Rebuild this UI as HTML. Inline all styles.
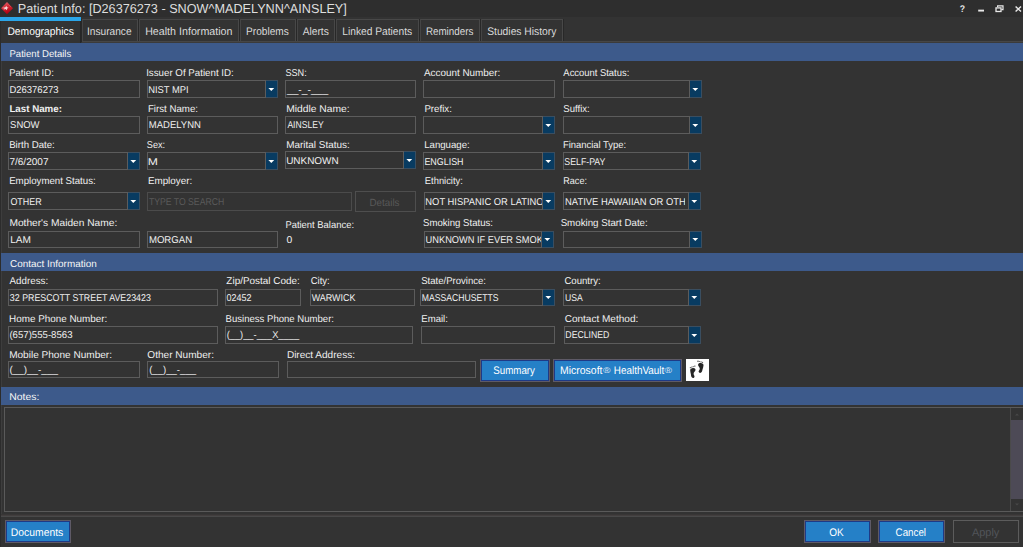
<!DOCTYPE html>
<html lang="en"><head><meta charset="utf-8"><title>Patient Info</title><style>
*{box-sizing:border-box;margin:0;padding:0}
html,body{width:1023px;height:547px;overflow:hidden;background:#333333}
body{position:relative;font-family:"Liberation Sans","DejaVu Sans",sans-serif;font-size:10px;color:#f0f0f0}
.a{position:absolute}
.t{position:absolute;white-space:pre;transform-origin:0 0;display:block;text-rendering:geometricPrecision}
</style></head><body>
<div class="a " style="left:0;top:0;width:1023px;height:17px;background:#2e2e2e"></div>
<svg class="a" style="left:0px;top:1px" width="15" height="15" viewBox="0 0 15 15"><defs><linearGradient id="g" x1="0" y1="0" x2="0.3" y2="1"><stop offset="0" stop-color="#e8707a"/><stop offset="0.45" stop-color="#d22a36"/><stop offset="1" stop-color="#b00010"/></linearGradient></defs><polygon points="7,1.100 13,7.200 7,13.300 1,7.200" fill="url(#g)"/><path d="M1.800 7.100l3.600-.9 .8-1.500 .9 1.600 1.500.5 -1.400.8 -.3 1.700 -1.300-1.200 -2.200.6 1.200-1.300z" fill="#fbe4e6" opacity=".92"/><path d="M8.500 3.500l2.500 2.600" stroke="#e88" stroke-width=".6" opacity=".6"/></svg>
<svg class="a" style="left:955px;top:0" width="68" height="17" viewBox="0 0 68 17"><g fill="none" stroke="#e8e8e8"><path d="M23.2 10.6h5.8" stroke-width="1.9"/><path d="M42.6 7V5.8h5.4v3.8h-1.6" stroke-width="1.2"/><rect x="41" y="7.9" width="5" height="3.6" stroke-width="1.3"/><path d="M60.6 6.4l5.4 5.2M66 6.4l-5.4 5.2" stroke-width="1.4"/></g></svg>
<div class="a " style="left:0;top:17px;width:81px;height:4px;background:#2ba5e8"></div>
<div class="a " style="left:0px;top:21px;width:81px;height:22px;border-left:1px solid #2b2b2b;border-right:1px solid #262626"></div>
<div class="a " style="left:82px;top:19px;width:56px;height:23px;border:1px solid #484848;border-left-color:#454545"></div>
<div class="a " style="left:81px;top:19px;width:1px;height:23px;background:#282828"></div>
<div class="a " style="left:139px;top:19px;width:100px;height:23px;border:1px solid #484848;border-left-color:#454545"></div>
<div class="a " style="left:138px;top:19px;width:1px;height:23px;background:#282828"></div>
<div class="a " style="left:240px;top:19px;width:56px;height:23px;border:1px solid #484848;border-left-color:#454545"></div>
<div class="a " style="left:239px;top:19px;width:1px;height:23px;background:#282828"></div>
<div class="a " style="left:297px;top:19px;width:38px;height:23px;border:1px solid #484848;border-left-color:#454545"></div>
<div class="a " style="left:296px;top:19px;width:1px;height:23px;background:#282828"></div>
<div class="a " style="left:336px;top:19px;width:83px;height:23px;border:1px solid #484848;border-left-color:#454545"></div>
<div class="a " style="left:335px;top:19px;width:1px;height:23px;background:#282828"></div>
<div class="a " style="left:420px;top:19px;width:60px;height:23px;border:1px solid #484848;border-left-color:#454545"></div>
<div class="a " style="left:419px;top:19px;width:1px;height:23px;background:#282828"></div>
<div class="a " style="left:481px;top:19px;width:82px;height:23px;border:1px solid #484848;border-left-color:#454545"></div>
<div class="a " style="left:480px;top:19px;width:1px;height:23px;background:#282828"></div>
<div class="a " style="left:563px;top:19px;width:1px;height:23px;background:#282828"></div>
<div class="a " style="left:82px;top:41px;width:941px;height:1px;background:#464646"></div>
<div class="a " style="left:82px;top:42px;width:941px;height:1px;background:#3b3b3b"></div>
<div class="a " style="left:0;top:21px;width:1px;height:526px;background:#2c2c2c"></div>
<div class="a " style="left:1px;top:43px;width:1px;height:473px;background:#3d3d3d"></div>
<div class="a " style="left:1px;top:43px;width:1022px;height:18px;background:#3d5a8b"></div>
<div class="a " style="left:1px;top:253px;width:1022px;height:18px;background:#3d5a8b"></div>
<div class="a " style="left:1px;top:387px;width:1022px;height:18px;background:#3d5a8b"></div>
<div class="a " style="left:8px;top:80px;width:132px;height:18px;border:1px solid #5c5c5c"></div>
<div class="a " style="left:147px;top:80px;width:131px;height:18px;border:1px solid #5c5c5c"></div>
<div class="a " style="left:265px;top:80px;width:1px;height:18px;background:#5c5c5c"></div>
<div class="a " style="left:266px;top:80px;width:12px;height:18px;background:#083b61;border:1px solid #3a4e60;border-left:0"></div>
<svg class="a" style="left:268px;top:88px" width="7" height="4" viewBox="0 0 7 4"><polygon points="0.4,0 6.2,0 3.3,3.1" fill="#fff"/></svg>
<div class="a " style="left:285px;top:80px;width:131px;height:18px;border:1px solid #5c5c5c"></div>
<div class="a " style="left:423px;top:80px;width:132px;height:18px;border:1px solid #5c5c5c"></div>
<div class="a " style="left:563px;top:80px;width:139px;height:18px;border:1px solid #5c5c5c"></div>
<div class="a " style="left:689px;top:80px;width:1px;height:18px;background:#5c5c5c"></div>
<div class="a " style="left:690px;top:80px;width:12px;height:18px;background:#083b61;border:1px solid #3a4e60;border-left:0"></div>
<svg class="a" style="left:692px;top:88px" width="7" height="4" viewBox="0 0 7 4"><polygon points="0.4,0 6.2,0 3.3,3.1" fill="#fff"/></svg>
<div class="a " style="left:8px;top:116px;width:132px;height:18px;border:1px solid #5c5c5c"></div>
<div class="a " style="left:147px;top:116px;width:131px;height:18px;border:1px solid #5c5c5c"></div>
<div class="a " style="left:285px;top:116px;width:131px;height:18px;border:1px solid #5c5c5c"></div>
<div class="a " style="left:423px;top:116px;width:132px;height:18px;border:1px solid #5c5c5c"></div>
<div class="a " style="left:542px;top:116px;width:1px;height:18px;background:#5c5c5c"></div>
<div class="a " style="left:543px;top:116px;width:12px;height:18px;background:#083b61;border:1px solid #3a4e60;border-left:0"></div>
<svg class="a" style="left:545px;top:124px" width="7" height="4" viewBox="0 0 7 4"><polygon points="0.4,0 6.2,0 3.3,3.1" fill="#fff"/></svg>
<div class="a " style="left:563px;top:116px;width:139px;height:18px;border:1px solid #5c5c5c"></div>
<div class="a " style="left:689px;top:116px;width:1px;height:18px;background:#5c5c5c"></div>
<div class="a " style="left:690px;top:116px;width:12px;height:18px;background:#083b61;border:1px solid #3a4e60;border-left:0"></div>
<svg class="a" style="left:692px;top:124px" width="7" height="4" viewBox="0 0 7 4"><polygon points="0.4,0 6.2,0 3.3,3.1" fill="#fff"/></svg>
<div class="a " style="left:8px;top:152px;width:132px;height:18px;border:1px solid #5c5c5c"></div>
<div class="a " style="left:127px;top:152px;width:1px;height:18px;background:#5c5c5c"></div>
<div class="a " style="left:128px;top:152px;width:12px;height:18px;background:#083b61;border:1px solid #3a4e60;border-left:0"></div>
<svg class="a" style="left:130px;top:160px" width="7" height="4" viewBox="0 0 7 4"><polygon points="0.4,0 6.2,0 3.3,3.1" fill="#fff"/></svg>
<div class="a " style="left:147px;top:152px;width:131px;height:18px;border:1px solid #5c5c5c"></div>
<div class="a " style="left:265px;top:152px;width:1px;height:18px;background:#5c5c5c"></div>
<div class="a " style="left:266px;top:152px;width:12px;height:18px;background:#083b61;border:1px solid #3a4e60;border-left:0"></div>
<svg class="a" style="left:268px;top:160px" width="7" height="4" viewBox="0 0 7 4"><polygon points="0.4,0 6.2,0 3.3,3.1" fill="#fff"/></svg>
<div class="a " style="left:285px;top:151px;width:131px;height:18px;border:1px solid #5c5c5c"></div>
<div class="a " style="left:403px;top:151px;width:1px;height:18px;background:#5c5c5c"></div>
<div class="a " style="left:404px;top:151px;width:12px;height:18px;background:#083b61;border:1px solid #3a4e60;border-left:0"></div>
<svg class="a" style="left:406px;top:159px" width="7" height="4" viewBox="0 0 7 4"><polygon points="0.4,0 6.2,0 3.3,3.1" fill="#fff"/></svg>
<div class="a " style="left:423px;top:152px;width:132px;height:18px;border:1px solid #5c5c5c"></div>
<div class="a " style="left:542px;top:152px;width:1px;height:18px;background:#5c5c5c"></div>
<div class="a " style="left:543px;top:152px;width:12px;height:18px;background:#083b61;border:1px solid #3a4e60;border-left:0"></div>
<svg class="a" style="left:545px;top:160px" width="7" height="4" viewBox="0 0 7 4"><polygon points="0.4,0 6.2,0 3.3,3.1" fill="#fff"/></svg>
<div class="a " style="left:563px;top:152px;width:138px;height:18px;border:1px solid #5c5c5c"></div>
<div class="a " style="left:688px;top:152px;width:1px;height:18px;background:#5c5c5c"></div>
<div class="a " style="left:689px;top:152px;width:12px;height:18px;background:#083b61;border:1px solid #3a4e60;border-left:0"></div>
<svg class="a" style="left:691px;top:160px" width="7" height="4" viewBox="0 0 7 4"><polygon points="0.4,0 6.2,0 3.3,3.1" fill="#fff"/></svg>
<div class="a " style="left:8px;top:192px;width:132px;height:18px;border:1px solid #5c5c5c"></div>
<div class="a " style="left:127px;top:192px;width:1px;height:18px;background:#5c5c5c"></div>
<div class="a " style="left:128px;top:192px;width:12px;height:18px;background:#083b61;border:1px solid #3a4e60;border-left:0"></div>
<svg class="a" style="left:130px;top:200px" width="7" height="4" viewBox="0 0 7 4"><polygon points="0.4,0 6.2,0 3.3,3.1" fill="#fff"/></svg>
<div class="a " style="left:147px;top:192px;width:205px;height:19px;border:1px solid #4b4b4b"></div>
<div class="a " style="left:355px;top:191px;width:61px;height:21px;border:1px solid #4e4e4e"></div>
<div class="a " style="left:424px;top:192px;width:131px;height:18px;border:1px solid #5c5c5c"></div>
<div class="a " style="left:542px;top:192px;width:1px;height:18px;background:#5c5c5c"></div>
<div class="a " style="left:543px;top:192px;width:12px;height:18px;background:#083b61;border:1px solid #3a4e60;border-left:0"></div>
<svg class="a" style="left:545px;top:200px" width="7" height="4" viewBox="0 0 7 4"><polygon points="0.4,0 6.2,0 3.3,3.1" fill="#fff"/></svg>
<div class="a " style="left:563px;top:192px;width:138px;height:18px;border:1px solid #5c5c5c"></div>
<div class="a " style="left:688px;top:192px;width:1px;height:18px;background:#5c5c5c"></div>
<div class="a " style="left:689px;top:192px;width:12px;height:18px;background:#083b61;border:1px solid #3a4e60;border-left:0"></div>
<svg class="a" style="left:691px;top:200px" width="7" height="4" viewBox="0 0 7 4"><polygon points="0.4,0 6.2,0 3.3,3.1" fill="#fff"/></svg>
<div class="a " style="left:8px;top:231px;width:132px;height:17px;border:1px solid #5c5c5c"></div>
<div class="a " style="left:147px;top:231px;width:131px;height:17px;border:1px solid #5c5c5c"></div>
<div class="a " style="left:424px;top:231px;width:130px;height:17px;border:1px solid #5c5c5c"></div>
<div class="a " style="left:541px;top:231px;width:1px;height:17px;background:#5c5c5c"></div>
<div class="a " style="left:542px;top:231px;width:12px;height:17px;background:#083b61;border:1px solid #3a4e60;border-left:0"></div>
<svg class="a" style="left:544px;top:238px" width="7" height="4" viewBox="0 0 7 4"><polygon points="0.4,0 6.2,0 3.3,3.1" fill="#fff"/></svg>
<div class="a " style="left:563px;top:231px;width:139px;height:17px;border:1px solid #5c5c5c"></div>
<div class="a " style="left:689px;top:231px;width:1px;height:17px;background:#5c5c5c"></div>
<div class="a " style="left:690px;top:231px;width:12px;height:17px;background:#083b61;border:1px solid #3a4e60;border-left:0"></div>
<svg class="a" style="left:692px;top:238px" width="7" height="4" viewBox="0 0 7 4"><polygon points="0.4,0 6.2,0 3.3,3.1" fill="#fff"/></svg>
<div class="a " style="left:8px;top:289px;width:210px;height:17px;border:1px solid #5c5c5c"></div>
<div class="a " style="left:225px;top:289px;width:76px;height:17px;border:1px solid #5c5c5c"></div>
<div class="a " style="left:310px;top:289px;width:105px;height:17px;border:1px solid #5c5c5c"></div>
<div class="a " style="left:420px;top:289px;width:135px;height:17px;border:1px solid #5c5c5c"></div>
<div class="a " style="left:542px;top:289px;width:1px;height:17px;background:#5c5c5c"></div>
<div class="a " style="left:543px;top:289px;width:12px;height:17px;background:#083b61;border:1px solid #3a4e60;border-left:0"></div>
<svg class="a" style="left:545px;top:296px" width="7" height="4" viewBox="0 0 7 4"><polygon points="0.4,0 6.2,0 3.3,3.1" fill="#fff"/></svg>
<div class="a " style="left:563px;top:289px;width:138px;height:17px;border:1px solid #5c5c5c"></div>
<div class="a " style="left:688px;top:289px;width:1px;height:17px;background:#5c5c5c"></div>
<div class="a " style="left:689px;top:289px;width:12px;height:17px;background:#083b61;border:1px solid #3a4e60;border-left:0"></div>
<svg class="a" style="left:691px;top:296px" width="7" height="4" viewBox="0 0 7 4"><polygon points="0.4,0 6.2,0 3.3,3.1" fill="#fff"/></svg>
<div class="a " style="left:8px;top:326px;width:210px;height:18px;border:1px solid #5c5c5c"></div>
<div class="a " style="left:225px;top:326px;width:188px;height:18px;border:1px solid #5c5c5c"></div>
<div class="a " style="left:421px;top:326px;width:134px;height:18px;border:1px solid #5c5c5c"></div>
<div class="a " style="left:564px;top:326px;width:137px;height:18px;border:1px solid #5c5c5c"></div>
<div class="a " style="left:688px;top:326px;width:1px;height:18px;background:#5c5c5c"></div>
<div class="a " style="left:689px;top:326px;width:12px;height:18px;background:#083b61;border:1px solid #3a4e60;border-left:0"></div>
<svg class="a" style="left:691px;top:334px" width="7" height="4" viewBox="0 0 7 4"><polygon points="0.4,0 6.2,0 3.3,3.1" fill="#fff"/></svg>
<div class="a " style="left:8px;top:361px;width:132px;height:17px;border:1px solid #5c5c5c"></div>
<div class="a " style="left:147px;top:361px;width:132px;height:17px;border:1px solid #5c5c5c"></div>
<div class="a " style="left:287px;top:361px;width:189px;height:17px;border:1px solid #5c5c5c"></div>
<div class="a " style="left:480px;top:359px;width:70px;height:23px;border:1px solid #5e5a66;background:#1e3a86;padding:1px"><div style='width:100%;height:100%;background:#2580c7'></div></div>
<div class="a " style="left:553px;top:359px;width:129px;height:23px;border:1px solid #5e5a66;background:#1e3a86;padding:1px"><div style='width:100%;height:100%;background:#2580c7'></div></div>
<svg class="a" style="left:686px;top:359px" width="23" height="22" viewBox="0 0 23 22"><rect width="23" height="22" fill="#fff"/><g fill="#262626"><path d="M4.200 11.400C4.100 10.000 5.500 9.200 7.000 9.100C8.600 9.000 9.700 9.700 9.500 11.100C9.300 12.400 7.700 13.200 7.600 14.700C7.500 15.900 8.700 16.600 8.500 17.700C8.300 18.800 6.900 19.300 6.000 18.600C5.000 17.800 5.100 16.500 4.900 15.300C4.700 13.900 4.300 12.800 4.200 11.400z"/><path d="M17.500 6.400C17.600 5.000 16.300 4.200 14.800 4.100C13.300 4.000 12.000 4.600 12.100 6.000C12.200 7.400 13.800 8.300 13.800 9.700C13.800 10.800 12.500 11.500 12.600 12.600C12.700 13.700 14.100 14.300 15.100 13.600C16.100 12.900 16.200 11.700 16.500 10.500C16.800 9.200 17.400 7.900 17.500 6.400z"/></g><g fill="#666"><ellipse cx="4.400" cy="8.700" rx=".7" ry=".6"/><ellipse cx="5.800" cy="8.100" rx=".7" ry=".6"/><ellipse cx="7.200" cy="7.600" rx=".7" ry=".6"/><ellipse cx="8.800" cy="7.100" rx=".9" ry=".7"/><ellipse cx="12.000" cy="2.200" rx=".9" ry=".7"/><ellipse cx="13.600" cy="2.500" rx=".7" ry=".6"/><ellipse cx="15.100" cy="2.900" rx=".7" ry=".6"/><ellipse cx="16.500" cy="3.400" rx=".7" ry=".6"/></g></svg>
<div class="a " style="left:4px;top:407px;width:1030px;height:105px;border:1px solid #5a5a5a"></div>
<div class="a " style="left:1010px;top:408px;width:1px;height:103px;background:#4a4a4a"></div>
<div class="a " style="left:1011px;top:420px;width:12px;height:79px;background:#4d4a56"></div>
<svg class="a" style="left:1011px;top:408px" width="12" height="103" viewBox="0 0 12 103"><path d="M4 7.600l2-2.200 2 2.200z M4 95.400l2 2.200 2-2.200z" fill="#484848"/></svg>
<div class="a " style="left:1px;top:514px;width:1022px;height:1px;background:#383636"></div>
<div class="a " style="left:1px;top:515px;width:1022px;height:1px;background:#423e3e"></div>
<div class="a " style="left:1px;top:516px;width:1022px;height:1px;background:#494949"></div>
<div class="a " style="left:5px;top:520px;width:66px;height:23px;border:1px solid #5e5a66;background:#1e3a86;padding:1px"><div style='width:100%;height:100%;background:#2580c7'></div></div>
<div class="a " style="left:804px;top:520px;width:67px;height:23px;border:1px solid #5e5a66;background:#1e3a86;padding:1px"><div style='width:100%;height:100%;background:#2580c7'></div></div>
<div class="a " style="left:878px;top:520px;width:67px;height:23px;border:1px solid #5e5a66;background:#1e3a86;padding:1px"><div style='width:100%;height:100%;background:#2580c7'></div></div>
<div class="a " style="left:953px;top:520px;width:66px;height:23px;border:1px solid #5c5c5c"></div>
<span class="t" style="left:0;top:1px;font-size:13px;line-height:15px;color:#dedede;transform:translateX(17.83px) scaleX(0.9739);">Patient Info: [D26376273 - SNOW^MADELYNN^AINSLEY]</span>
<span class="t" style="left:0;top:4px;font-size:9.6px;line-height:11px;color:#e6e6e6;transform:translateX(959.70px) scaleX(0.8946);font-weight:bold;">?</span>
<span class="t" style="left:0;top:26px;font-size:11px;line-height:12px;color:#ffffff;transform:translateX(7.44px) scaleX(0.9354);">Demographics</span>
<span class="t" style="left:0;top:26px;font-size:11px;line-height:12px;color:#dadada;transform:translateX(86.90px) scaleX(0.9253);">Insurance</span>
<span class="t" style="left:0;top:26px;font-size:11px;line-height:12px;color:#dadada;transform:translateX(145.13px) scaleX(0.9720);">Health Information</span>
<span class="t" style="left:0;top:26px;font-size:11px;line-height:12px;color:#dadada;transform:translateX(246.07px) scaleX(0.9174);">Problems</span>
<span class="t" style="left:0;top:26px;font-size:11px;line-height:12px;color:#dadada;transform:translateX(302.63px) scaleX(0.9296);">Alerts</span>
<span class="t" style="left:0;top:26px;font-size:11px;line-height:12px;color:#dadada;transform:translateX(342.25px) scaleX(0.9293);">Linked Patients</span>
<span class="t" style="left:0;top:26px;font-size:11px;line-height:12px;color:#dadada;transform:translateX(425.89px) scaleX(0.8924);">Reminders</span>
<span class="t" style="left:0;top:26px;font-size:11px;line-height:12px;color:#dadada;transform:translateX(487.16px) scaleX(0.9359);">Studies History</span>
<span class="t" style="left:0;top:49px;font-size:9.9px;line-height:11px;color:#f6f6f6;transform:translateX(9.43px) scaleX(0.9716);">Patient Details</span>
<span class="t" style="left:0;top:259px;font-size:9.9px;line-height:11px;color:#f6f6f6;transform:translateX(10.09px) scaleX(1.0053);">Contact Information</span>
<span class="t" style="left:0;top:392px;font-size:9.9px;line-height:11px;color:#f6f6f6;transform:translateX(9.23px) scaleX(1.0532);">Notes:</span>
<span class="t" style="left:0;top:68px;font-size:9.9px;line-height:11px;color:#f0f0f0;transform:translateX(9.16px) scaleX(0.9692);">Patient ID:</span>
<span class="t" style="left:0;top:85px;font-size:9.9px;line-height:11px;color:#f0f0f0;transform:translateX(9.42px) scaleX(0.9606);">D26376273</span>
<span class="t" style="left:0;top:68px;font-size:9.9px;line-height:11px;color:#f0f0f0;transform:translateX(146.14px) scaleX(0.9858);">Issuer Of Patient ID:</span>
<span class="t" style="left:0;top:85px;font-size:9.9px;line-height:11px;color:#f0f0f0;transform:translateX(148.17px) scaleX(0.9492);">NIST MPI</span>
<span class="t" style="left:0;top:68px;font-size:9.9px;line-height:11px;color:#f0f0f0;transform:translateX(285.38px) scaleX(0.9242);">SSN:</span>
<span class="t" style="left:0;top:85px;font-size:9.9px;line-height:11px;color:#f0f0f0;transform:translateX(286.92px) scaleX(1.0420);">__-_-___</span>
<span class="t" style="left:0;top:68px;font-size:9.9px;line-height:11px;color:#f0f0f0;transform:translateX(423.94px) scaleX(1.0017);">Account Number:</span>
<span class="t" style="left:0;top:68px;font-size:9.9px;line-height:11px;color:#f0f0f0;transform:translateX(563.37px) scaleX(0.9525);">Account Status:</span>
<span class="t" style="left:0;top:104px;font-size:9.9px;line-height:11px;color:#f0f0f0;transform:translateX(9.38px) scaleX(0.9872);font-weight:bold;">Last Name:</span>
<span class="t" style="left:0;top:120px;font-size:9.9px;line-height:11px;color:#f0f0f0;transform:translateX(10.10px) scaleX(0.9556);">SNOW</span>
<span class="t" style="left:0;top:104px;font-size:9.9px;line-height:11px;color:#f0f0f0;transform:translateX(147.90px) scaleX(0.9816);">First Name:</span>
<span class="t" style="left:0;top:120px;font-size:9.9px;line-height:11px;color:#f0f0f0;transform:translateX(148.85px) scaleX(0.9604);">MADELYNN</span>
<span class="t" style="left:0;top:104px;font-size:9.9px;line-height:11px;color:#f0f0f0;transform:translateX(286.13px) scaleX(1.0428);">Middle Name:</span>
<span class="t" style="left:0;top:120px;font-size:9.9px;line-height:11px;color:#f0f0f0;transform:translateX(287.38px) scaleX(0.8682);">AINSLEY</span>
<span class="t" style="left:0;top:104px;font-size:9.9px;line-height:11px;color:#f0f0f0;transform:translateX(424.38px) scaleX(0.9814);">Prefix:</span>
<span class="t" style="left:0;top:104px;font-size:9.9px;line-height:11px;color:#f0f0f0;transform:translateX(563.35px) scaleX(0.9683);">Suffix:</span>
<span class="t" style="left:0;top:140px;font-size:9.9px;line-height:11px;color:#f0f0f0;transform:translateX(9.17px) scaleX(0.9773);">Birth Date:</span>
<span class="t" style="left:0;top:157px;font-size:9.9px;line-height:11px;color:#f0f0f0;transform:translateX(9.39px) scaleX(1.0173);">7/6/2007</span>
<span class="t" style="left:0;top:140px;font-size:9.9px;line-height:11px;color:#f0f0f0;transform:translateX(146.85px) scaleX(0.9251);">Sex:</span>
<span class="t" style="left:0;top:157px;font-size:9.9px;line-height:11px;color:#f0f0f0;transform:translateX(147.65px) scaleX(1.2317);">M</span>
<span class="t" style="left:0;top:140px;font-size:9.9px;line-height:11px;color:#f0f0f0;transform:translateX(286.13px) scaleX(1.0078);">Marital Status:</span>
<span class="t" style="left:0;top:156px;font-size:9.9px;line-height:11px;color:#f0f0f0;transform:translateX(286.14px) scaleX(1.0066);">UNKNOWN</span>
<span class="t" style="left:0;top:140px;font-size:9.9px;line-height:11px;color:#f0f0f0;transform:translateX(424.17px) scaleX(0.9759);">Language:</span>
<span class="t" style="left:0;top:157px;font-size:9.9px;line-height:11px;color:#f0f0f0;transform:translateX(424.41px) scaleX(0.9028);">ENGLISH</span>
<span class="t" style="left:0;top:140px;font-size:9.9px;line-height:11px;color:#f0f0f0;transform:translateX(562.89px) scaleX(0.9549);">Financial Type:</span>
<span class="t" style="left:0;top:157px;font-size:9.9px;line-height:11px;color:#f0f0f0;transform:translateX(564.33px) scaleX(0.8867);">SELF-PAY</span>
<span class="t" style="left:0;top:176px;font-size:9.9px;line-height:11px;color:#f0f0f0;transform:translateX(9.17px) scaleX(0.9791);">Employment Status:</span>
<span class="t" style="left:0;top:197px;font-size:9.9px;line-height:11px;color:#f0f0f0;transform:translateX(10.42px) scaleX(0.9030);">OTHER</span>
<span class="t" style="left:0;top:176px;font-size:9.9px;line-height:11px;color:#f0f0f0;transform:translateX(147.90px) scaleX(0.9954);">Employer:</span>
<span class="t" style="left:0;top:197px;font-size:9.9px;line-height:11px;color:#5a5a5a;transform:translateX(148.89px) scaleX(0.8781);">TYPE TO SEARCH</span>
<span class="t" style="left:0;top:198px;font-size:10.4px;line-height:11px;color:#595959;transform:translateX(369.56px) scaleX(0.9411);">Details</span>
<span class="t" style="left:0;top:176px;font-size:9.9px;line-height:11px;color:#f0f0f0;transform:translateX(424.86px) scaleX(0.9462);">Ethnicity:</span>
<div class="a" style="left:425px;top:197px;width:116.60px;height:11px;overflow:hidden"><span class="t" style="left:0;top:0;font-size:9.9px;line-height:11px;color:#f0f0f0;transform:translateX(0.34px) scaleX(0.9496);">NOT HISPANIC OR LATINO</span></div>
<span class="t" style="left:0;top:176px;font-size:9.9px;line-height:11px;color:#f0f0f0;transform:translateX(563.30px) scaleX(0.9154);">Race:</span>
<div class="a" style="left:564px;top:197px;width:121.40px;height:11px;overflow:hidden"><span class="t" style="left:0;top:0;font-size:9.9px;line-height:11px;color:#f0f0f0;transform:translateX(1.09px) scaleX(0.9506);">NATIVE HAWAIIAN OR OTHER</span></div>
<span class="t" style="left:0;top:218px;font-size:9.9px;line-height:11px;color:#f0f0f0;transform:translateX(9.39px) scaleX(1.0318);">Mother's Maiden Name:</span>
<span class="t" style="left:0;top:235px;font-size:9.9px;line-height:11px;color:#f0f0f0;transform:translateX(10.14px) scaleX(1.0198);">LAM</span>
<span class="t" style="left:0;top:235px;font-size:9.9px;line-height:11px;color:#f0f0f0;transform:translateX(148.88px) scaleX(0.9725);">MORGAN</span>
<span class="t" style="left:0;top:220px;font-size:9.9px;line-height:11px;color:#f0f0f0;transform:translateX(285.38px) scaleX(0.9543);">Patient Balance:</span>
<span class="t" style="left:0;top:235px;font-size:9.9px;line-height:11px;color:#f0f0f0;transform:translateX(286.57px) scaleX(1.0519);">0</span>
<span class="t" style="left:0;top:218px;font-size:9.9px;line-height:11px;color:#f0f0f0;transform:translateX(423.11px) scaleX(0.9709);">Smoking Status:</span>
<div class="a" style="left:425px;top:235px;width:116.40px;height:11px;overflow:hidden"><span class="t" style="left:0;top:0;font-size:9.9px;line-height:11px;color:#f0f0f0;transform:translateX(0.60px) scaleX(0.9372);">UNKNOWN IF EVER SMOKED</span></div>
<span class="t" style="left:0;top:218px;font-size:9.9px;line-height:11px;color:#f0f0f0;transform:translateX(560.63px) scaleX(0.9853);">Smoking Start Date:</span>
<span class="t" style="left:0;top:276px;font-size:9.9px;line-height:11px;color:#f0f0f0;transform:translateX(9.61px) scaleX(0.9873);">Address:</span>
<span class="t" style="left:0;top:293px;font-size:9.9px;line-height:11px;color:#f0f0f0;transform:translateX(9.86px) scaleX(0.8949);">32 PRESCOTT STREET AVE23423</span>
<span class="t" style="left:0;top:276px;font-size:9.9px;line-height:11px;color:#f0f0f0;transform:translateX(226.35px) scaleX(1.0073);">Zip/Postal Code:</span>
<span class="t" style="left:0;top:293px;font-size:9.9px;line-height:11px;color:#f0f0f0;transform:translateX(226.51px) scaleX(0.9072);">02452</span>
<span class="t" style="left:0;top:276px;font-size:9.9px;line-height:11px;color:#f0f0f0;transform:translateX(310.66px) scaleX(0.9626);">City:</span>
<span class="t" style="left:0;top:293px;font-size:9.9px;line-height:11px;color:#f0f0f0;transform:translateX(311.64px) scaleX(0.9070);">WARWICK</span>
<span class="t" style="left:0;top:276px;font-size:9.9px;line-height:11px;color:#f0f0f0;transform:translateX(421.16px) scaleX(0.9685);">State/Province:</span>
<span class="t" style="left:0;top:293px;font-size:9.9px;line-height:11px;color:#f0f0f0;transform:translateX(421.87px) scaleX(0.8738);">MASSACHUSETTS</span>
<span class="t" style="left:0;top:276px;font-size:9.9px;line-height:11px;color:#f0f0f0;transform:translateX(564.41px) scaleX(0.9725);">Country:</span>
<span class="t" style="left:0;top:293px;font-size:9.9px;line-height:11px;color:#f0f0f0;transform:translateX(564.89px) scaleX(0.8750);">USA</span>
<span class="t" style="left:0;top:314px;font-size:9.9px;line-height:11px;color:#f0f0f0;transform:translateX(9.09px) scaleX(0.9996);">Home Phone Number:</span>
<span class="t" style="left:0;top:330px;font-size:9.9px;line-height:11px;color:#f0f0f0;transform:translateX(9.42px) scaleX(0.9737);">(657)555-8563</span>
<span class="t" style="left:0;top:314px;font-size:9.9px;line-height:11px;color:#f0f0f0;transform:translateX(225.57px) scaleX(0.9681);">Business Phone Number:</span>
<span class="t" style="left:0;top:330px;font-size:9.9px;line-height:11px;color:#f0f0f0;transform:translateX(226.64px) scaleX(0.9421);">(__)__-___X____</span>
<span class="t" style="left:0;top:314px;font-size:9.9px;line-height:11px;color:#f0f0f0;transform:translateX(421.30px) scaleX(0.9683);">Email:</span>
<span class="t" style="left:0;top:314px;font-size:9.9px;line-height:11px;color:#f0f0f0;transform:translateX(564.64px) scaleX(1.0159);">Contact Method:</span>
<span class="t" style="left:0;top:330px;font-size:9.9px;line-height:11px;color:#f0f0f0;transform:translateX(565.33px) scaleX(0.8830);">DECLINED</span>
<span class="t" style="left:0;top:350px;font-size:9.9px;line-height:11px;color:#f0f0f0;transform:translateX(9.14px) scaleX(1.0180);">Mobile Phone Number:</span>
<span class="t" style="left:0;top:365px;font-size:9.9px;line-height:11px;color:#f0f0f0;transform:translateX(9.41px) scaleX(1.0040);">(__)__-___</span>
<span class="t" style="left:0;top:350px;font-size:9.9px;line-height:11px;color:#f0f0f0;transform:translateX(147.35px) scaleX(1.0199);">Other Number:</span>
<span class="t" style="left:0;top:365px;font-size:9.9px;line-height:11px;color:#f0f0f0;transform:translateX(149.14px) scaleX(0.9708);">(__)__-___</span>
<span class="t" style="left:0;top:350px;font-size:9.9px;line-height:11px;color:#f0f0f0;transform:translateX(286.88px) scaleX(1.0168);">Direct Address:</span>
<span class="t" style="left:0;top:365px;font-size:11px;line-height:12px;color:#fff;transform:translateX(493.28px) scaleX(0.8864);">Summary</span>
<span class="t" style="left:0;top:365px;font-size:11px;line-height:12px;color:#fff;transform:translateX(560.02px) scaleX(0.9515);">Microsoft</span>
<span class="t" style="left:0;top:366px;font-size:8.2px;line-height:9px;color:#e4eef8;transform:translateX(602.89px) scaleX(1.2406);">®</span>
<span class="t" style="left:0;top:365px;font-size:11px;line-height:12px;color:#fff;transform:translateX(613.81px) scaleX(0.9001);">HealthVault</span>
<span class="t" style="left:0;top:366px;font-size:8.2px;line-height:9px;color:#e4eef8;transform:translateX(664.49px) scaleX(1.2406);">®</span>
<span class="t" style="left:0;top:527px;font-size:11px;line-height:12px;color:#fff;transform:translateX(10.85px) scaleX(0.9421);">Documents</span>
<span class="t" style="left:0;top:527px;font-size:11px;line-height:12px;color:#fff;transform:translateX(829.36px) scaleX(0.9071);">OK</span>
<span class="t" style="left:0;top:527px;font-size:11px;line-height:12px;color:#fff;transform:translateX(895.61px) scaleX(0.8889);">Cancel</span>
<span class="t" style="left:0;top:527px;font-size:11px;line-height:12px;color:#52555a;transform:translateX(971.93px) scaleX(0.9956);">Apply</span>
</body></html>
